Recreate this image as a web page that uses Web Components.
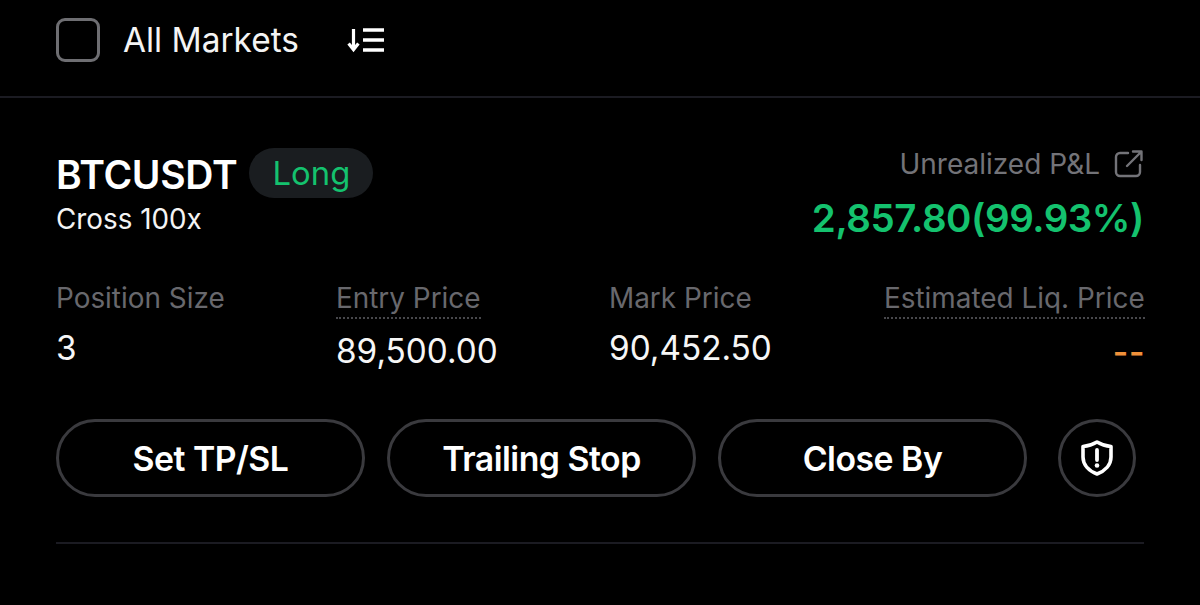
<!DOCTYPE html>
<html><head><meta charset="utf-8">
<style>
html,body{margin:0;padding:0;background:#000;}
body{width:1200px;height:605px;overflow:hidden;font-family:Inter,"Liberation Sans",sans-serif;color:#fff;}
</style></head><body>
<market-bar></market-bar>
<position-card symbol="BTCUSDT" side="Long" mode="Cross 100x" pnl="2,857.80(99.93%)"></position-card>
<template id="bar">
<style>
:host{display:flex;align-items:center;height:80px;border-bottom:2px solid #1b1b22;padding:0 56px 16px}
.cb{width:38px;height:38px;border:3px solid #6e6e72;border-radius:9px;flex:none}
.t{font-size:33.400px;line-height:40px;margin-left:23px;color:#f4f4f4}
svg{margin-left:47px;display:block}
</style>
<div class="cb"></div><div class="t">All Markets</div>
<svg width="40" height="28" viewBox="0 0 40 28" fill="none" stroke="#fff" stroke-width="3.400"><path d="M7.500 3V23M2.600 17.600 7.500 23.600 12.400 17.600" stroke-width="3.200"/><path d="M17 4H38M17 14H38M17 24H38" /></svg>
</template>
<template id="card">
<style>
:host{display:block;padding:50px 56px 0}
.top{display:flex;justify-content:space-between;height:106px}
.l1{display:flex;align-items:center;gap:12px;height:50px}
.sym{font-size:39px;font-weight:600;letter-spacing:-.3px;line-height:50px;margin-top:4px}
.pill{background:#1a1d20;color:#14c26e;border-radius:25px;height:50px;width:124px;display:flex;align-items:center;justify-content:center;font-size:32.800px;box-sizing:border-box}
.mode{font-size:27.800px;line-height:32px;color:#f4f4f4;margin-top:5px}
.r{display:flex;flex-direction:column;align-items:flex-end}
.lab{display:flex;align-items:center;gap:14px;color:#737378;font-size:28px;line-height:32px}
.val{color:#14c26e;font-size:38.500px;font-weight:600;line-height:50px;margin-top:13px;letter-spacing:-.45px}
.stats{display:flex;justify-content:space-between;height:137px;margin-top:28px}
</style>
<div class="top">
 <div><div class="l1"><span class="sym" id="sym"></span><span class="pill" id="side"></span></div><div class="mode" id="mode"></div></div>
 <div class="r"><div class="lab">Unrealized P&amp;L <svg width="30" height="28" viewBox="0 0 30 28" fill="none" stroke="#737378" stroke-width="2.400" stroke-linecap="round" stroke-linejoin="round"><path d="M14 3H6a4 4 0 0 0-4 4v15a4 4 0 0 0 4 4h16a4 4 0 0 0 4-4v-7"/><path d="M13 16 27 2M19 1.500H27.500V10"/></svg></div><div class="val" id="pnl"></div></div>
</div>
<div class="stats">
 <stat-cell style="width:168px" label="Position Size" value="3"></stat-cell>
 <stat-cell style="width:161px" label="Entry Price" value="89,500.00" dotted offset="3"></stat-cell>
 <stat-cell style="width:163px" label="Mark Price" value="90,452.50"></stat-cell>
 <stat-cell style="width:260px" label="Estimated Liq. Price" value="--" dotted right></stat-cell>
</div>
<action-row></action-row>
</template>
<template id="stat">
<style>
:host{display:block}
.l{display:inline-block;font-size:27.900px;line-height:32px;color:#68686d;border-bottom:2px solid transparent;padding-bottom:3px;white-space:nowrap}
:host([dotted]) .l{border-bottom:2px dotted #48484c}
.v{font-size:33.300px;line-height:40px;color:#f6f6f6;margin-top:9px;white-space:nowrap}
:host([right]) {text-align:right}
:host([right]) .v{color:#f0913a;font-weight:600;letter-spacing:.6px;margin-top:13px;margin-right:-1px}
</style>
<div class="l" id="l"></div><div class="v" id="v"></div>
</template>
<template id="actions">
<style>
:host{display:flex;gap:22px;align-items:center;padding-bottom:45px;border-bottom:2px solid #1b1b22}
button{all:unset;box-sizing:border-box;width:309px;height:78px;border:3px solid #3a3a3e;border-radius:39px;display:flex;align-items:center;justify-content:center;font:600 33.800px/40px Inter,"Liberation Sans",sans-serif;color:#fff;letter-spacing:-.5px;padding-top:1px}
.ic{width:78px;margin-left:9px;flex:none;padding-top:0}
</style>
<button>Set TP/SL</button><button>Trailing Stop</button><button>Close By</button>
<button class="ic" aria-label="Risk"><svg width="38" height="38" viewBox="0 0 38 38" fill="none"><path d="M19 3C24 6 28 7 33 7.500V18C33 26 27 32 19 35 11 32 5 26 5 18V7.500C10 7 14 6 19 3Z" stroke="#fff" stroke-width="3.600" stroke-linejoin="round"/><path d="M19 11V21" stroke="#fff" stroke-width="3.800" stroke-linecap="round"/><circle cx="19" cy="26.500" r="2.300" fill="#fff"/></svg></button>
</template>
<script>
function mk(name,tpl,init){customElements.define(name,class extends HTMLElement{constructor(){super();const s=this.attachShadow({mode:'open'});s.appendChild(document.getElementById(tpl).content.cloneNode(true));}connectedCallback(){init&&init(this,this.shadowRoot);}});}
mk('market-bar','bar');
mk('action-row','actions');
mk('stat-cell','stat',(h,s)=>{s.getElementById('l').textContent=h.getAttribute('label');const v=s.getElementById('v');v.textContent=h.getAttribute('value');if(h.getAttribute('offset'))v.style.marginTop=(9+ +h.getAttribute('offset'))+'px';});
mk('position-card','card',(h,s)=>{s.getElementById('sym').textContent=h.getAttribute('symbol');s.getElementById('side').textContent=h.getAttribute('side');s.getElementById('mode').textContent=h.getAttribute('mode');s.getElementById('pnl').textContent=h.getAttribute('pnl');});
</script>
</body></html>
